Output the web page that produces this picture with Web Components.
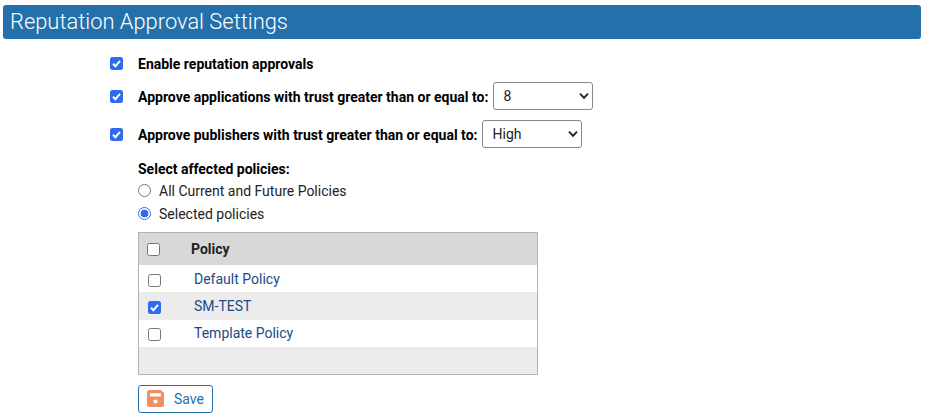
<!DOCTYPE html>
<html lang="en">
<head>
<meta charset="utf-8">
<title>Reputation Approval Settings</title>
<style>
  body {
    margin: 0;
    background: #fff;
    font-family: Roboto, "Liberation Sans", sans-serif;
    color: #000;
  }
</style>
</head>
<body>
<settings-banner>Reputation Approval Settings</settings-banner>
<reputation-form></reputation-form>

<script>
class SettingsBanner extends HTMLElement {
  connectedCallback () {
    this.attachShadow({ mode: 'open' }).innerHTML = /* html */`
      <style>
        :host {
          display: block;
          margin: 5px 4px 0 3px;
          height: 34px;
          padding-left: 7px;
          border-radius: 3px;
          background: #2470ab;
          color: #fff;
          font-size: 21.9px;
          font-weight: 300;
          line-height: 34px;
        }
      </style>
      <slot></slot>
    `
  }
}

class TickBox extends HTMLElement {
  connectedCallback () {
    this.attachShadow({ mode: 'open' }).innerHTML = /* html */`
      <style>
        :host {
          display: block;
          width: 13px;
          height: 13px;
          box-sizing: border-box;
          border: 1px solid #767676;
          border-radius: 2.5px;
          background: #fff;
        }
        :host([checked]) {
          border: 0;
          background: #2f6bf0;
        }
        svg {
          display: none;
          width: 13px;
          height: 13px;
        }
        :host([checked]) svg {
          display: block;
        }
      </style>
      <svg viewBox="0 0 13 13"><path d="M3 6.8 5.4 9.2 10 3.900" fill="none" stroke="#fff" stroke-width="2"/></svg>
    `
  }
}

class RadioDot extends HTMLElement {
  connectedCallback () {
    this.attachShadow({ mode: 'open' }).innerHTML = /* html */`
      <style>
        :host {
          display: block;
          width: 13px;
          height: 13px;
          box-sizing: border-box;
          border: 1px solid #767676;
          border-radius: 50%;
          background: #fff;
        }
        :host([checked]) {
          border: 1.5px solid #2f6bf0;
          background: radial-gradient(circle, #2f6bf0 0 3.6px, #fff 4.2px);
        }
      </style>
    `
  }
}

class PickList extends HTMLElement {
  connectedCallback () {
    this.attachShadow({ mode: 'open' }).innerHTML = /* html */`
      <style>
        :host {
          display: block;
          position: relative;
          width: 100px;
          height: 28px;
        }
        select {
          appearance: none;
          width: 100%;
          height: 100%;
          margin: 0;
          padding: 0 0 0 9px;
          box-sizing: border-box;
          border: 1px solid #84888c;
          border-radius: 3px;
          background: #fff;
          color: #222;
          font: 400 14px Roboto, sans-serif;
        }
        svg {
          position: absolute;
          right: 4px;
          top: 10px;
          width: 10px;
          height: 8px;
          pointer-events: none;
        }
      </style>
      <select><option>${this.getAttribute('value')}</option></select>
      <svg viewBox="0 0 10 8"><path d="M1 1.6 5 5.8 9 1.6" fill="none" stroke="#222" stroke-width="1.9"/></svg>
    `
  }
}

class PolicyTable extends HTMLElement {
  connectedCallback () {
    const rows = [
      { name: 'Default Policy' },
      { name: 'SM-TEST', checked: true },
      { name: 'Template Policy' }
    ]
    this.attachShadow({ mode: 'open' }).innerHTML = /* html */`
      <style>
        :host {
          display: block;
          width: 400px;
          box-sizing: border-box;
          border: 1px solid #b4b4b4;
          background: #ececec;
          font-size: 14px;
        }
        .head, .row {
          display: grid;
          align-items: center;
        }
        .head {
          height: 32px;
          padding-left: 8px;
          grid-template-columns: 44px 1fr;
          background: #d8d8d8;
          font-weight: 700;
          color: #222;
        }
        .row {
          height: 27px;
          padding-left: 9px;
          grid-template-columns: 46px 1fr;
          background: #fff;
          color: #204a87;
        }
        .row.odd {
          height: 28px;
          background: #ececec;
        }
        .row tick-box {
          align-self: start;
          margin-top: 9px;
        }
        .row:last-of-type tick-box {
          margin-top: 8px;
        }
        .row:last-of-type span {
          margin-bottom: 2px;
        }
        .filler {
          height: 27px;
        }
      </style>
      <div class="head"><tick-box></tick-box><span>Policy</span></div>
      ${rows.map((row, i) => `
        <div class="row ${i % 2 ? 'odd' : ''}">
          <tick-box ${row.checked ? 'checked' : ''}></tick-box>
          <span>${row.name}</span>
        </div>`).join('')}
      <section class="filler"></section>
    `
  }
}

class SaveButton extends HTMLElement {
  connectedCallback () {
    this.attachShadow({ mode: 'open' }).innerHTML = /* html */`
      <style>
        :host {
          display: inline-flex;
          align-items: center;
          gap: 10px;
          width: 75px;
          height: 28px;
          box-sizing: border-box;
          padding-left: 8px;
          border: 1px solid #2470ab;
          border-radius: 3px;
          background: #fff;
          color: #2470ab;
          font-size: 14px;
        }
        svg {
          width: 17px;
          height: 17px;
          margin-bottom: 1px;
        }
      </style>
      <svg viewBox="0 0 16 17" preserveAspectRatio="none">
        <path fill="#f0905f" fill-rule="evenodd" d="M2.500 0H13L16 3V14.500A2.500 2.500 0 0 1 13.500 17H2.500A2.500 2.500 0 0 1 0 14.500V2.500A2.500 2.500 0 0 1 2.500 0ZM2.800 3.200V6.500H13V3.200ZM8 9.500a2 2 0 1 0 0 4a2 2 0 1 0 0-4Z"/>
      </svg>
      <span>Save</span>
    `
  }
}

class ReputationForm extends HTMLElement {
  connectedCallback () {
    this.attachShadow({ mode: 'open' }).innerHTML = /* html */`
      <style>
        :host {
          display: block;
          padding: 11px 0 0 110px;
          font-size: 14px;
        }
        .row {
          display: flex;
          align-items: center;
          height: 28px;
        }
        .row.first {
          height: 27px;
        }
        .row + .row {
          margin-top: 5px;
        }
        .row.far {
          margin-top: 10px;
        }
        .row b {
          margin: 0 5px 0 15px;
          padding-top: 2px;
          white-space: nowrap;
        }
        .row.first b {
          padding-top: 0;
        }
        .policies {
          padding-left: 28px;
        }
        .heading {
          margin-top: 11px;
          font-weight: 700;
          line-height: 20px;
        }
        .radio {
          display: flex;
          align-items: center;
          gap: 8px;
          height: 23px;
          color: #222;
        }
        policy-table {
          margin-top: 7px;
        }
        save-button {
          margin-top: 10px;
        }
      </style>
      <div class="row first"><tick-box checked></tick-box><b>Enable reputation approvals</b></div>
      <div class="row"><tick-box checked></tick-box><b>Approve applications with trust greater than or equal to:</b><pick-list value="8"></pick-list></div>
      <div class="row far"><tick-box checked></tick-box><b>Approve publishers with trust greater than or equal to:</b><pick-list value="High"></pick-list></div>
      <div class="policies">
        <div class="heading">Select affected policies:</div>
        <div class="radio"><radio-dot></radio-dot><span>All Current and Future Policies</span></div>
        <div class="radio"><radio-dot checked></radio-dot><span>Selected policies</span></div>
        <policy-table></policy-table>
        <save-button></save-button>
      </div>
    `
  }
}

customElements.define('settings-banner', SettingsBanner)
customElements.define('tick-box', TickBox)
customElements.define('radio-dot', RadioDot)
customElements.define('pick-list', PickList)
customElements.define('policy-table', PolicyTable)
customElements.define('save-button', SaveButton)
customElements.define('reputation-form', ReputationForm)
</script>
</body>
</html>
